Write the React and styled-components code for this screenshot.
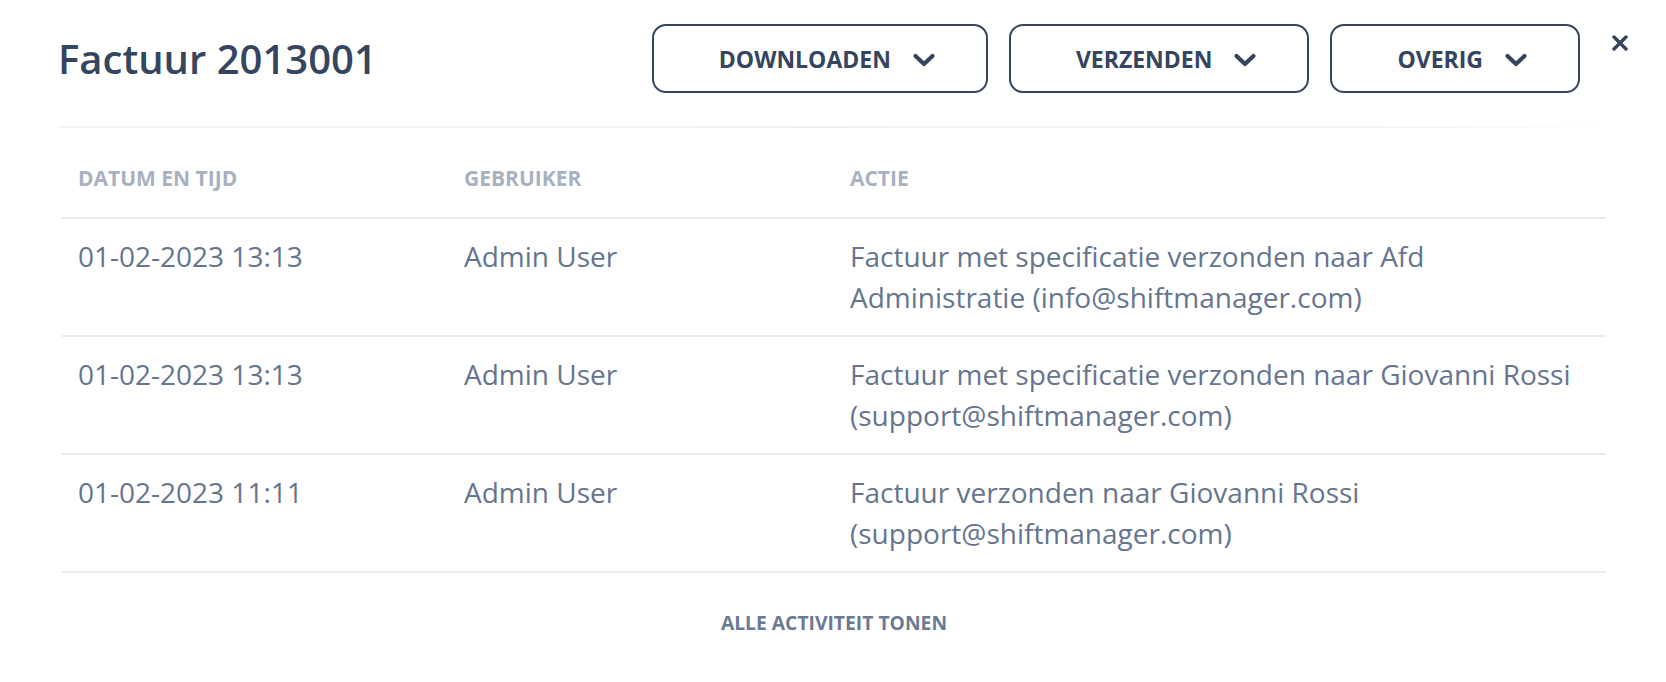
import styled, { createGlobalStyle } from 'styled-components';

const rows = [
    {
        date: '01-02-2023 13:13',
        user: 'Admin User',
        action: 'Factuur met specificatie verzonden naar Afd Administratie (info@shiftmanager.com)',
    },
    {
        date: '01-02-2023 13:13',
        user: 'Admin User',
        action: 'Factuur met specificatie verzonden naar Giovanni Rossi (support@shiftmanager.com)',
    },
    {
        date: '01-02-2023 11:11',
        user: 'Admin User',
        action: 'Factuur verzonden naar Giovanni Rossi (support@shiftmanager.com)',
    },
];

const actions = ['DOWNLOADEN', 'VERZENDEN', 'OVERIG'];

const Chevron = () => (
    <svg width="24" height="14" viewBox="0 0 24 14" fill="none">
        <polyline
            points="3.5,3 12,11 20.5,3"
            stroke="currentColor"
            strokeWidth="4.2"
            strokeLinecap="round"
            strokeLinejoin="round"
        />
    </svg>
);

const CloseIcon = () => (
    <svg width="16" height="16" viewBox="0 0 16 16" fill="none">
        <path d="M2 2 L14 14 M14 2 L2 14" stroke="currentColor" strokeWidth="3.4" strokeLinecap="round" />
    </svg>
);

const App = () => {
    return (
        <>
            <GlobalStyle />
            <Wrapper>
                <Header>
                    <Title>Factuur 2013001</Title>
                    <Actions>
                        {actions.map(label => (
                            <DropButton key={label} type="button">
                                <span>{label}</span>
                                <Chevron />
                            </DropButton>
                        ))}
                    </Actions>
                    <CloseButton type="button" aria-label="Sluiten">
                        <CloseIcon />
                    </CloseButton>
                </Header>
                <Divider />
                <Table>
                    <thead>
                        <tr>
                            <Th $width="25%">DATUM EN TIJD</Th>
                            <Th $width="25%">GEBRUIKER</Th>
                            <Th $width="50%">ACTIE</Th>
                        </tr>
                    </thead>
                    <tbody>
                        {rows.map((row, index) => (
                            <tr key={index}>
                                <Td>{row.date}</Td>
                                <Td>{row.user}</Td>
                                <Td>{row.action}</Td>
                            </tr>
                        ))}
                    </tbody>
                </Table>
                <Footer>
                    <ShowAll type="button">ALLE ACTIVITEIT TONEN</ShowAll>
                </Footer>
            </Wrapper>
        </>
    );
};
export default App;

const GlobalStyle = createGlobalStyle`
    body {
        margin: 0;
        background: #ffffff;
        font-family: 'Open Sans', 'Noto Sans', sans-serif;
    }
`;

const Wrapper = styled.div`
    width: 1666px;
    height: 682px;
    box-sizing: border-box;
    padding: 24px 38px 0 58px;
    background: #ffffff;
    overflow: hidden;
`;

const Header = styled.div`
    display: flex;
    align-items: center;
    height: 69px;
`;

const Title = styled.h1`
    flex: 1;
    margin: 0;
    font-size: 40px;
    font-weight: 600;
    color: #354560;
    line-height: 1;
`;

const Actions = styled.div`
    display: flex;
    gap: 21px;
`;

const DropButton = styled.button`
    display: flex;
    align-items: center;
    justify-content: center;
    gap: 21px;
    height: 69px;
    box-sizing: border-box;
    padding: 0 50px 0 65px;
    border: 2px solid #354560;
    border-radius: 14px;
    background: #ffffff;
    color: #354560;
    font-family: 'Open Sans', sans-serif;
    font-size: 23px;
    font-weight: 700;
    cursor: pointer;
    svg {
        display: block;
        margin-top: 2px;
    }
`;

const CloseButton = styled.button`
    align-self: flex-start;
    margin: 11px 0 0 32px;
    padding: 0;
    border: none;
    background: none;
    color: #354560;
    cursor: pointer;
    svg {
        display: block;
    }
`;

const Divider = styled.div`
    height: 2px;
    margin: 33px 22px 0 0;
    background: linear-gradient(to right, #f4f4f5 0%, #f1f2f3 50%, #f6f6f7 90%, rgba(255, 255, 255, 0) 100%);
`;

const Table = styled.table`
    width: calc(100% - 26px);
    margin: 0 22px 0 4px;
    border-collapse: collapse;
    table-layout: fixed;
`;

const Th = styled.th`
    width: ${props => props.$width};
    box-sizing: border-box;
    padding: 38px 16px 27px;
    text-align: left;
    font-size: 21px;
    font-weight: 700;
    line-height: 24px;
    color: #a8b1c2;
    border-bottom: 2px solid #e8ebef;
`;

const Td = styled.td`
    padding: 17px 16px;
    vertical-align: top;
    font-size: 28px;
    font-weight: 400;
    line-height: 41px;
    color: #66758f;
    border-bottom: 2px solid #e8ebef;
`;

const Footer = styled.div`
    display: flex;
    justify-content: center;
    margin: 38px 22px 0 4px;
`;

const ShowAll = styled.button`
    padding: 0;
    border: none;
    background: none;
    font-family: 'Open Sans', sans-serif;
    font-size: 19.3px;
    font-weight: 700;
    line-height: 24px;
    color: #6b7a94;
    cursor: pointer;
`;
